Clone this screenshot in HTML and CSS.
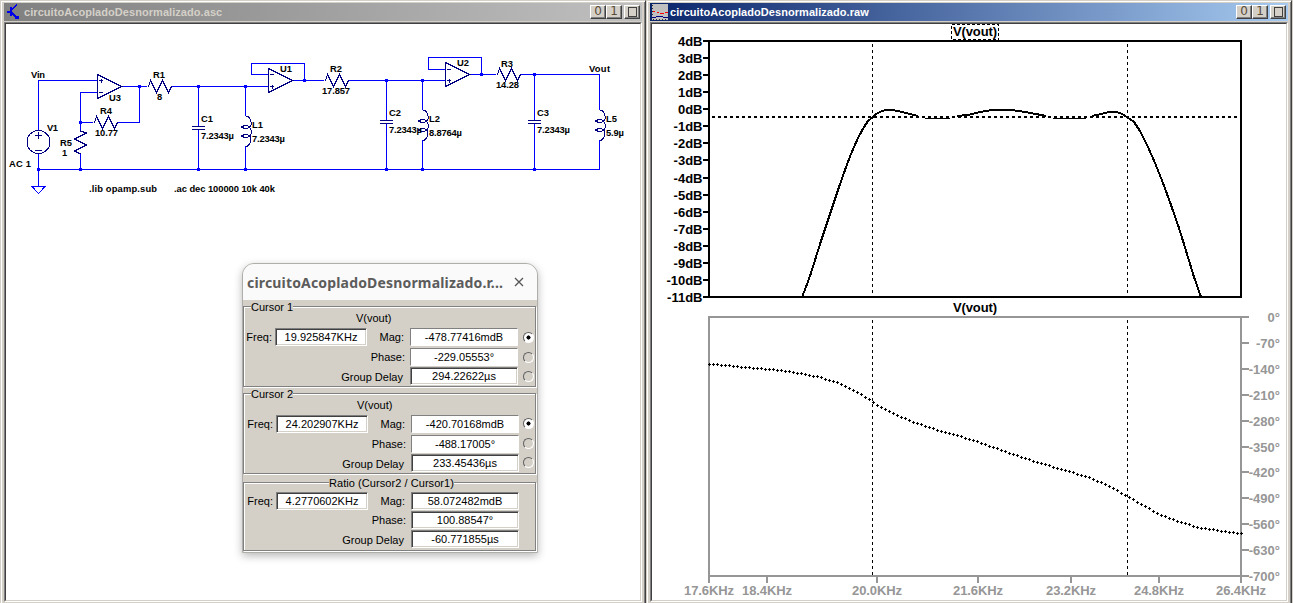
FILE: index.html
```html
<!DOCTYPE html>
<html lang="es">
<head>
<meta charset="utf-8">
<title>circuitoAcopladoDesnormalizado</title>
<link rel="stylesheet" href="styles.css">
</head>
<body>
<main class="desktop">
  <section class="window">
    <header class="titlebar inactive">
      <svg class="app-icon" width="16" height="16" viewBox="0 0 16 16" shape-rendering="crispEdges" fill="none" stroke="#0000e8"><path d="M0 7.500H3M4 3V12" stroke-width="2"/><path d="M5 5.500 L10 1M5 9L11 15M8 14.500H11V11.500" stroke-width="1.500"/></svg>
      <h1 class="caption">circuitoAcopladoDesnormalizado.asc</h1>
      <div class="controls"><button>0</button><button>1</button><button class="close"><i></i></button></div>
    </header>
    <div class="client">
      <svg class="schematic" width="634" height="576" viewBox="6 24 634 576">
        <defs>
          <path id="rh" d="M0 0H1L3-6 9 6 15-6 21 6 24 0"/>
          <g id="coil"><path d="M0 0H2C6 3 6 6 5.500 9C5 12 2 12.500-1 12.500L-4 11 -1 9.500H2C6 11 6 16 5.500 18C5 21 2 21.500-1 21.500L-4 20 -1 18.500H2C7 21 6 27 2 30H0"/></g>
          <path id="amp" d="M0-12V12L24 0Z"/>
          <path id="plates" d="M-6-1.500H7M-6 1.500H7"/>
        </defs>
        <g class="wire">
          <path d="M38.500 130V80.500H97M97 92.500H80.500V130M80.500 154V169.500M80.500 122.500H93M118 122.500H139.500V86.500M121 86.500H147M171 86.500H268M38.500 154V186M38 169.500H599.500V140M198.500 86V126M198.500 130V169M245.500 86V116M245.500 146V169M268 74.500H251.500V63.500H304.500V80.500M292 80.500H324M348 80.500H445M386.500 80V120M386.500 124V169M422.500 80V110M422.500 140V169M445 69.500H428.500V57.500H481.500V74.500M469 74.500H496M520 74.500H599.500V110M534.500 74V120M534.500 124V169"/>
          <path d="M32 186.500H45L38.500 193.500Z"/>
        </g>
        <g class="part">
          <use href="#amp" x="97.500" y="86.500"/><use href="#amp" x="268.500" y="80.500"/><use href="#amp" x="445.500" y="74.500"/>
          <path d="M99 80.500H103M101 78.500V82.500M99 92.500H103M270 74.500H274M270 86.500H274M272 84.500V88.500M447 69.500H451M447 80.500H451M449 78.500V82.500"/>
          <use href="#rh" x="147.500" y="86.500"/><use href="#rh" x="93.500" y="122.500"/><use href="#rh" x="324.500" y="80.500"/><use href="#rh" x="496.500" y="74.500"/>
          <path d="M80.500 130V131L86.500 133 74.500 139 86.500 145 74.500 151 80.500 154"/>
          <circle cx="38.500" cy="142" r="11.500"/><path d="M35 135.500H42M38.500 132V139M35 150.500H42"/>
          <use href="#plates" x="198" y="128"/><use href="#plates" x="386" y="122"/><use href="#plates" x="534" y="122"/>
          <use href="#coil" x="245.500" y="116"/><use href="#coil" x="422.500" y="110"/><use href="#coil" x="599.500" y="110"/>
        </g>
        <path class="nodes" d="M37 168h3v3h-3zM79 168h3v3h-3zM197 168h3v3h-3zM244 168h3v3h-3zM385 168h3v3h-3zM421 168h3v3h-3zM533 168h3v3h-3zM79 121h3v3h-3zM138 85h3v3h-3zM197 85h3v3h-3zM244 85h3v3h-3zM303 79h3v3h-3zM385 79h3v3h-3zM421 79h3v3h-3zM480 73h3v3h-3zM533 73h3v3h-3z"/>
        <g class="net-text">
          <text x="31" y="78" textLength="14">Vin</text><text x="47" y="131" textLength="11">V1</text><text x="9" y="167" textLength="22">AC 1</text>
          <text x="60" y="146" textLength="12">R5</text><text x="62" y="156">1</text><text x="109" y="101" textLength="12">U3</text>
          <text x="100" y="114" textLength="12">R4</text><text x="95" y="136" textLength="23">10.77</text>
          <text x="153" y="78" textLength="12">R1</text><text x="157" y="100">8</text>
          <text x="201" y="122" textLength="12">C1</text><text x="201" y="139" textLength="33">7.2343µ</text>
          <text x="252" y="128" textLength="11">L1</text><text x="252" y="142" textLength="33">7.2343µ</text>
          <text x="280" y="72" textLength="12">U1</text><text x="330" y="72" textLength="12">R2</text><text x="322" y="94" textLength="28">17.857</text>
          <text x="389" y="116" textLength="12">C2</text><text x="389" y="133" textLength="33">7.2343µ</text>
          <text x="429" y="122" textLength="11">L2</text><text x="429" y="136" textLength="33">8.8764µ</text>
          <text x="457" y="66" textLength="12">U2</text><text x="501" y="67" textLength="12">R3</text><text x="496" y="88" textLength="23">14.28</text>
          <text x="537" y="116" textLength="12">C3</text><text x="537" y="133" textLength="33">7.2343µ</text>
          <text x="606" y="122" textLength="11">L5</text><text x="606" y="136" textLength="18">5.9µ</text><text x="589" y="72" textLength="21">Vout</text>
          <text x="89" y="192" textLength="68">.lib opamp.sub</text><text x="174" y="192" textLength="101">.ac dec 100000 10k 40k</text>
        </g>
      </svg>
    </div>
  </section>

  <section class="window">
    <header class="titlebar active">
      <svg class="app-icon wave" width="16" height="16" viewBox="0 0 16 16" shape-rendering="crispEdges" fill="none"><path d="M0 0H16V16H0Z" fill="#c0c0c0"/><path d="M1 15.500H16M.5 1V16" stroke="#333" stroke-dasharray="1 2"/><path d="M1 7.500H3M5 8.500H7M8 9.500H12M13 8.500H16" stroke="#f00"/><path d="M0 13.500H4M4 12.500H11M11 13.500H16" stroke="#000080"/></svg>
      <h1 class="caption">circuitoAcopladoDesnormalizado.raw</h1>
      <div class="controls"><button>0</button><button>1</button><button class="close"><i></i></button></div>
    </header>
    <div class="client">
      <svg class="plots" width="634" height="576" viewBox="652 24 634 576">
        <rect class="mag-frame" x="709" y="41" width="532" height="256"/>
        <path class="phase-frame" d="M709 582V317H1249M709 576H1249M1241 317V582"/>
        <g id="mag-axis" class="mag-axis"></g>
        <g id="phase-axis" class="phase-axis"></g>
        <path class="level" d="M712 117H1241"/>
        <path class="cursor" d="M872.500 44V297M1127.500 44V297M872.500 320V576M1127.500 320V576"/>
        <path class="trace" d="M802 297L806 287 811 273 816 257 821 241 827 223 833 205 839 187 845 170 851 154 858 138 864 127 868 121 873 117 876 114 880 112 885 110 893 110 902 112 910 114 918 116"/>
        <path class="trace" d="M957 116L968 115 980 112 992 110H1012L1025 112 1036 114 1046 116M1092 116L1101 114 1109 112H1117L1122 114 1127 117 1134 122 1140 131 1148 147 1155 163 1163 183 1171 205 1179 228 1187 254 1194 277 1201 297"/>
        <path class="ripple" d="M925 118.500H950M1053 118.500H1086"/>
        <path id="phase-trace" class="dots"/>
        <rect class="label-focus" x="951.500" y="24.500" width="47" height="15"/>
        <text class="plot-title" x="953" y="36" textLength="44">V(vout)</text>
        <text class="plot-title" x="953" y="312" textLength="44">V(vout)</text>
      </svg>
    </div>
  </section>
</main>

<aside class="dialog">
  <header class="dialog-head">
    <h2>circuitoAcopladoDesnormalizado.r...</h2>
    <svg width="10" height="10" viewBox="0 0 10 10" stroke="#555" stroke-width="1.300"><path d="M1 1L9 9M9 1L1 9"/></svg>
  </header>
  <div class="dialog-body">
    <section class="group first">
      <h3>Cursor 1</h3><p class="signal">V(vout)</p>
      <div class="readout">
        <label class="freq">Freq:</label><output>19.925847KHz</output><label>Mag:</label><output class="flat">-478.77416mdB</output><i class="radio on"></i>
        <label class="wide">Phase:</label><output class="flat">-229.05553°</output><i class="radio"></i>
        <label class="wide delay">Group Delay</label><output>294.22622µs</output><i class="radio"></i>
      </div>
    </section>
    <section class="group second">
      <h3>Cursor 2</h3><p class="signal">V(vout)</p>
      <div class="readout">
        <label class="freq">Freq:</label><output>24.202907KHz</output><label>Mag:</label><output class="flat">-420.70168mdB</output><i class="radio on"></i>
        <label class="wide">Phase:</label><output class="flat">-488.17005°</output><i class="radio"></i>
        <label class="wide delay">Group Delay</label><output>233.45436µs</output><i class="radio"></i>
      </div>
    </section>
    <section class="group ratio">
      <h3>Ratio (Cursor2 / Cursor1)</h3>
      <div class="readout">
        <label class="freq">Freq:</label><output>4.2770602KHz</output><label>Mag:</label><output>58.072482mdB</output><i></i>
        <label class="wide">Phase:</label><output>100.88547°</output><i></i>
        <label class="wide delay">Group Delay</label><output>-60.771855µs</output><i></i>
      </div>
    </section>
  </div>
</aside>
<script src="plots.js"></script>
</body>
</html>
```
FILE: styles.css
```css
* { box-sizing: border-box; }
body { margin: 0; width: 1293px; height: 603px; overflow: hidden; background: #d4d0c8; font-family: "Liberation Sans", Arial, sans-serif; }
h1, h2, h3, p { margin: 0; }
.desktop { display: flex; width: 1293px; height: 603px; }
.window { width: 646px; height: 603px; padding: 1px 2px 0 2px; border: solid; border-width: 1px 1px 0 1px; border-color: #d4d0c8 #404040 #d4d0c8 #d4d0c8; background: #d4d0c8; box-shadow: inset 1px 1px #fff, inset -1px 0 #808080; }
.titlebar { display: flex; align-items: center; height: 18px; margin: 1px 0 1px 1px; width: 638px; }
.inactive { background: linear-gradient(90deg, #808080, #c0c0c0); color: #d4d0c8; }
.active { background: linear-gradient(90deg, #0a246a, #a6caf0); color: #fff; }
.app-icon { margin: 1px 1px 1px 3px; flex: none; }
.wave { margin: 1px 2px; }
.caption { flex: 1; font-size: 11px; line-height: 18px; font-weight: bold; white-space: nowrap; letter-spacing: .06px; }
.controls { display: flex; margin-right: 2px; margin-top: -1px; }
.controls button { width: 16px; height: 14px; padding: 0; border: 1px solid; border-color: #fff #404040 #404040 #fff; box-shadow: inset -1px -1px #808080; background: #d4d0c8; color: #5a4a38; font: 12px/11px "DejaVu Sans", sans-serif; text-align: center; }
.controls .close { margin-left: 2px; display: flex; justify-content: center; padding-top: 1px; }
.close i { width: 9px; height: 10px; border: 1px solid #404040; }
.client { width: 638px; height: 580px; margin-left: 1px; background: #fff; border: solid; border-width: 1px; border-color: #808080 #fff #fff #808080; }
.client > svg { display: block; box-sizing: content-box; border: 1px solid; border-color: #404040 #d4d0c8 #d4d0c8 #404040; }
.wire { fill: none; stroke: #0000ff; shape-rendering: crispEdges; }
.part { fill: none; stroke: #000080; shape-rendering: crispEdges; }
.nodes { fill: #0000ff; shape-rendering: crispEdges; }
.net-text { font: bold 9.400px "Liberation Sans", sans-serif; fill: #000; }
.mag-frame { fill: none; stroke: #000; stroke-width: 2; }
.phase-frame { fill: none; stroke: #969696; stroke-width: 2; }
.mag-axis, .plot-title { font: bold 13px "Liberation Sans", sans-serif; fill: #000; }
.mag-axis text { text-anchor: end; }
.mag-axis path { stroke: #000; stroke-width: 2; }
.phase-axis { font: bold 13px "Liberation Sans", sans-serif; fill: #969696; }
.phase-axis path { stroke: #969696; stroke-width: 2; }
.phase-axis .deg { text-anchor: end; }
.phase-axis .hz { text-anchor: middle; letter-spacing: -.1px; }
.level { stroke: #000; stroke-width: 2; stroke-dasharray: 3 3; }
.cursor { stroke: #000; stroke-dasharray: 3 3; shape-rendering: crispEdges; }
.trace { fill: none; stroke: #000; stroke-width: 2; shape-rendering: crispEdges; }
.ripple { stroke: #000; }
.dots { stroke: #000; shape-rendering: crispEdges; }
.label-focus { fill: none; stroke: #000; stroke-dasharray: 3 2; shape-rendering: crispEdges; }

.dialog { position: absolute; left: 242px; top: 263px; width: 296px; height: 290px; border: 1px solid #b0aeaa; border-radius: 12px 12px 0 0; background: #d4d0c8; box-shadow: 0 3px 9px rgba(0,0,0,.28); overflow: hidden; }
.dialog-head { display: flex; align-items: center; justify-content: space-between; height: 36px; padding: 1px 13px 0 4px; background: #fafafa; }
.dialog-head h2 { font: bold 14px "Noto Sans", sans-serif; letter-spacing: .17px; color: #5c5c5c; white-space: nowrap; }
.dialog-head svg { margin-top: -2px; }
.dialog-body { padding: 6px 1px 0 0; }
.group { border: 1px solid #808080; box-shadow: inset 1px 1px #fff, 1px 1px #fff; font-size: 11px; line-height: 13px; color: #000; width: 293px; }
.first { height: 81px; }
.second { height: 81px; margin-top: 6px; }
.ratio { height: 69px; margin-top: 8px; }
.group h3 { width: max-content; margin: -6px 0 0 7px; height: 12px; line-height: 12px; font-size: 11px; font-weight: normal; background: #d4d0c8; }
.ratio h3 { margin-left: 85px; letter-spacing: .06px; }
.signal { margin-left: 112px; height: 13px; margin-top: -1px; }
.second .signal { margin-left: 113px; }
.readout { display: grid; grid-template-columns: 31px 92px 43px 108px 1fr; grid-template-rows: 20px 19px 18px; padding-top: 3px; }
.second .readout, .ratio .readout { padding-left: 1px; }
.ratio .readout { padding-top: 3px; grid-template-rows: 19px 19px 18px; }
.readout label { height: 18px; line-height: 18px; text-align: right; padding-right: 6px; white-space: nowrap; }
.readout .freq { padding-right: 3px; }
.readout .wide { grid-column: 1 / 4; padding-right: 5px; }
.readout .delay { padding-right: 7px; line-height: 20px; }
.readout output { height: 18px; line-height: 15px; text-align: center; background: #fff; border: 1px solid; border-color: #808080 #fff #fff #808080; box-shadow: inset 1px 1px #404040, inset -1px -1px #d4d0c8; padding-top: 1px; }
.readout .flat { box-shadow: none; }
.radio { width: 11px; height: 11px; margin: 4px 0 0 5px; border-radius: 50%; border: 1.500px solid; border-color: #606060 #fff #fff #606060; }
.second .radio { margin-left: 4px; margin-top: 3px; }
.radio.on { background: radial-gradient(circle, #000 0 1.800px, #fff 2.300px); }
```
FILE: plots.js
```js
const NS = 'http://www.w3.org/2000/svg';

function add(parent, tag, attrs, text) {
  const el = document.createElementNS(NS, tag);
  for (const key in attrs) el.setAttribute(key, attrs[key]);
  if (text) el.textContent = text;
  parent.appendChild(el);
}

const mag = document.getElementById('mag-axis');
for (let i = 0; i <= 15; i++) {
  const y = Math.round(41 + i * 256 / 15);
  add(mag, 'path', { d: `M703 ${y}H709` });
  add(mag, 'text', { x: 702.5, y: y + 5 }, `${4 - i}dB`);
}

const phase = document.getElementById('phase-axis');
for (let i = 0; i <= 10; i++) {
  const y = Math.round(317 + i * 25.9);
  add(phase, 'path', { d: `M1241 ${y}H1249` });
  add(phase, 'text', { x: 1280, y: y + 5, class: 'deg' }, `${i ? -70 * i : 0}°`);
}
[[709, '17.6'], [767, '18.4'], [877, '20.0'], [978, '21.6'], [1071, '23.2'], [1159, '24.8'], [1241, '26.4']].forEach(([x, f]) => {
  add(phase, 'path', { d: `M${x} 576V583` });
  add(phase, 'text', { x, y: 595, class: 'hz' }, `${f}KHz`);
});

// Phase response, sampled every 4px and drawn as small crosses
const curve = [[709, 364], [730, 366], [750, 368], [770, 369.5], [790, 372], [803, 374], [820, 377.5], [835, 382], [850, 388.5], [862, 395], [872, 402], [880, 407], [892, 413], [910, 421], [930, 428], [972, 440], [1000, 450], [1040, 463.5], [1060, 469], [1075, 473.5], [1090, 478], [1110, 487], [1127, 496.5], [1145, 506.5], [1160, 515], [1180, 522.5], [1200, 528], [1220, 531], [1241, 533.5]];
let d = '';
for (let x = 709, s = 0; x <= 1241; x += 4) {
  while (x > curve[s + 1][0]) s++;
  const [x0, y0] = curve[s], [x1, y1] = curve[s + 1];
  const y = Math.floor(y0 + (y1 - y0) * (x - x0) / (x1 - x0));
  d += `M${x - 1} ${y + 0.5}h3M${x + 0.5} ${y - 1}v3`;
}
document.getElementById('phase-trace').setAttribute('d', d);
```
